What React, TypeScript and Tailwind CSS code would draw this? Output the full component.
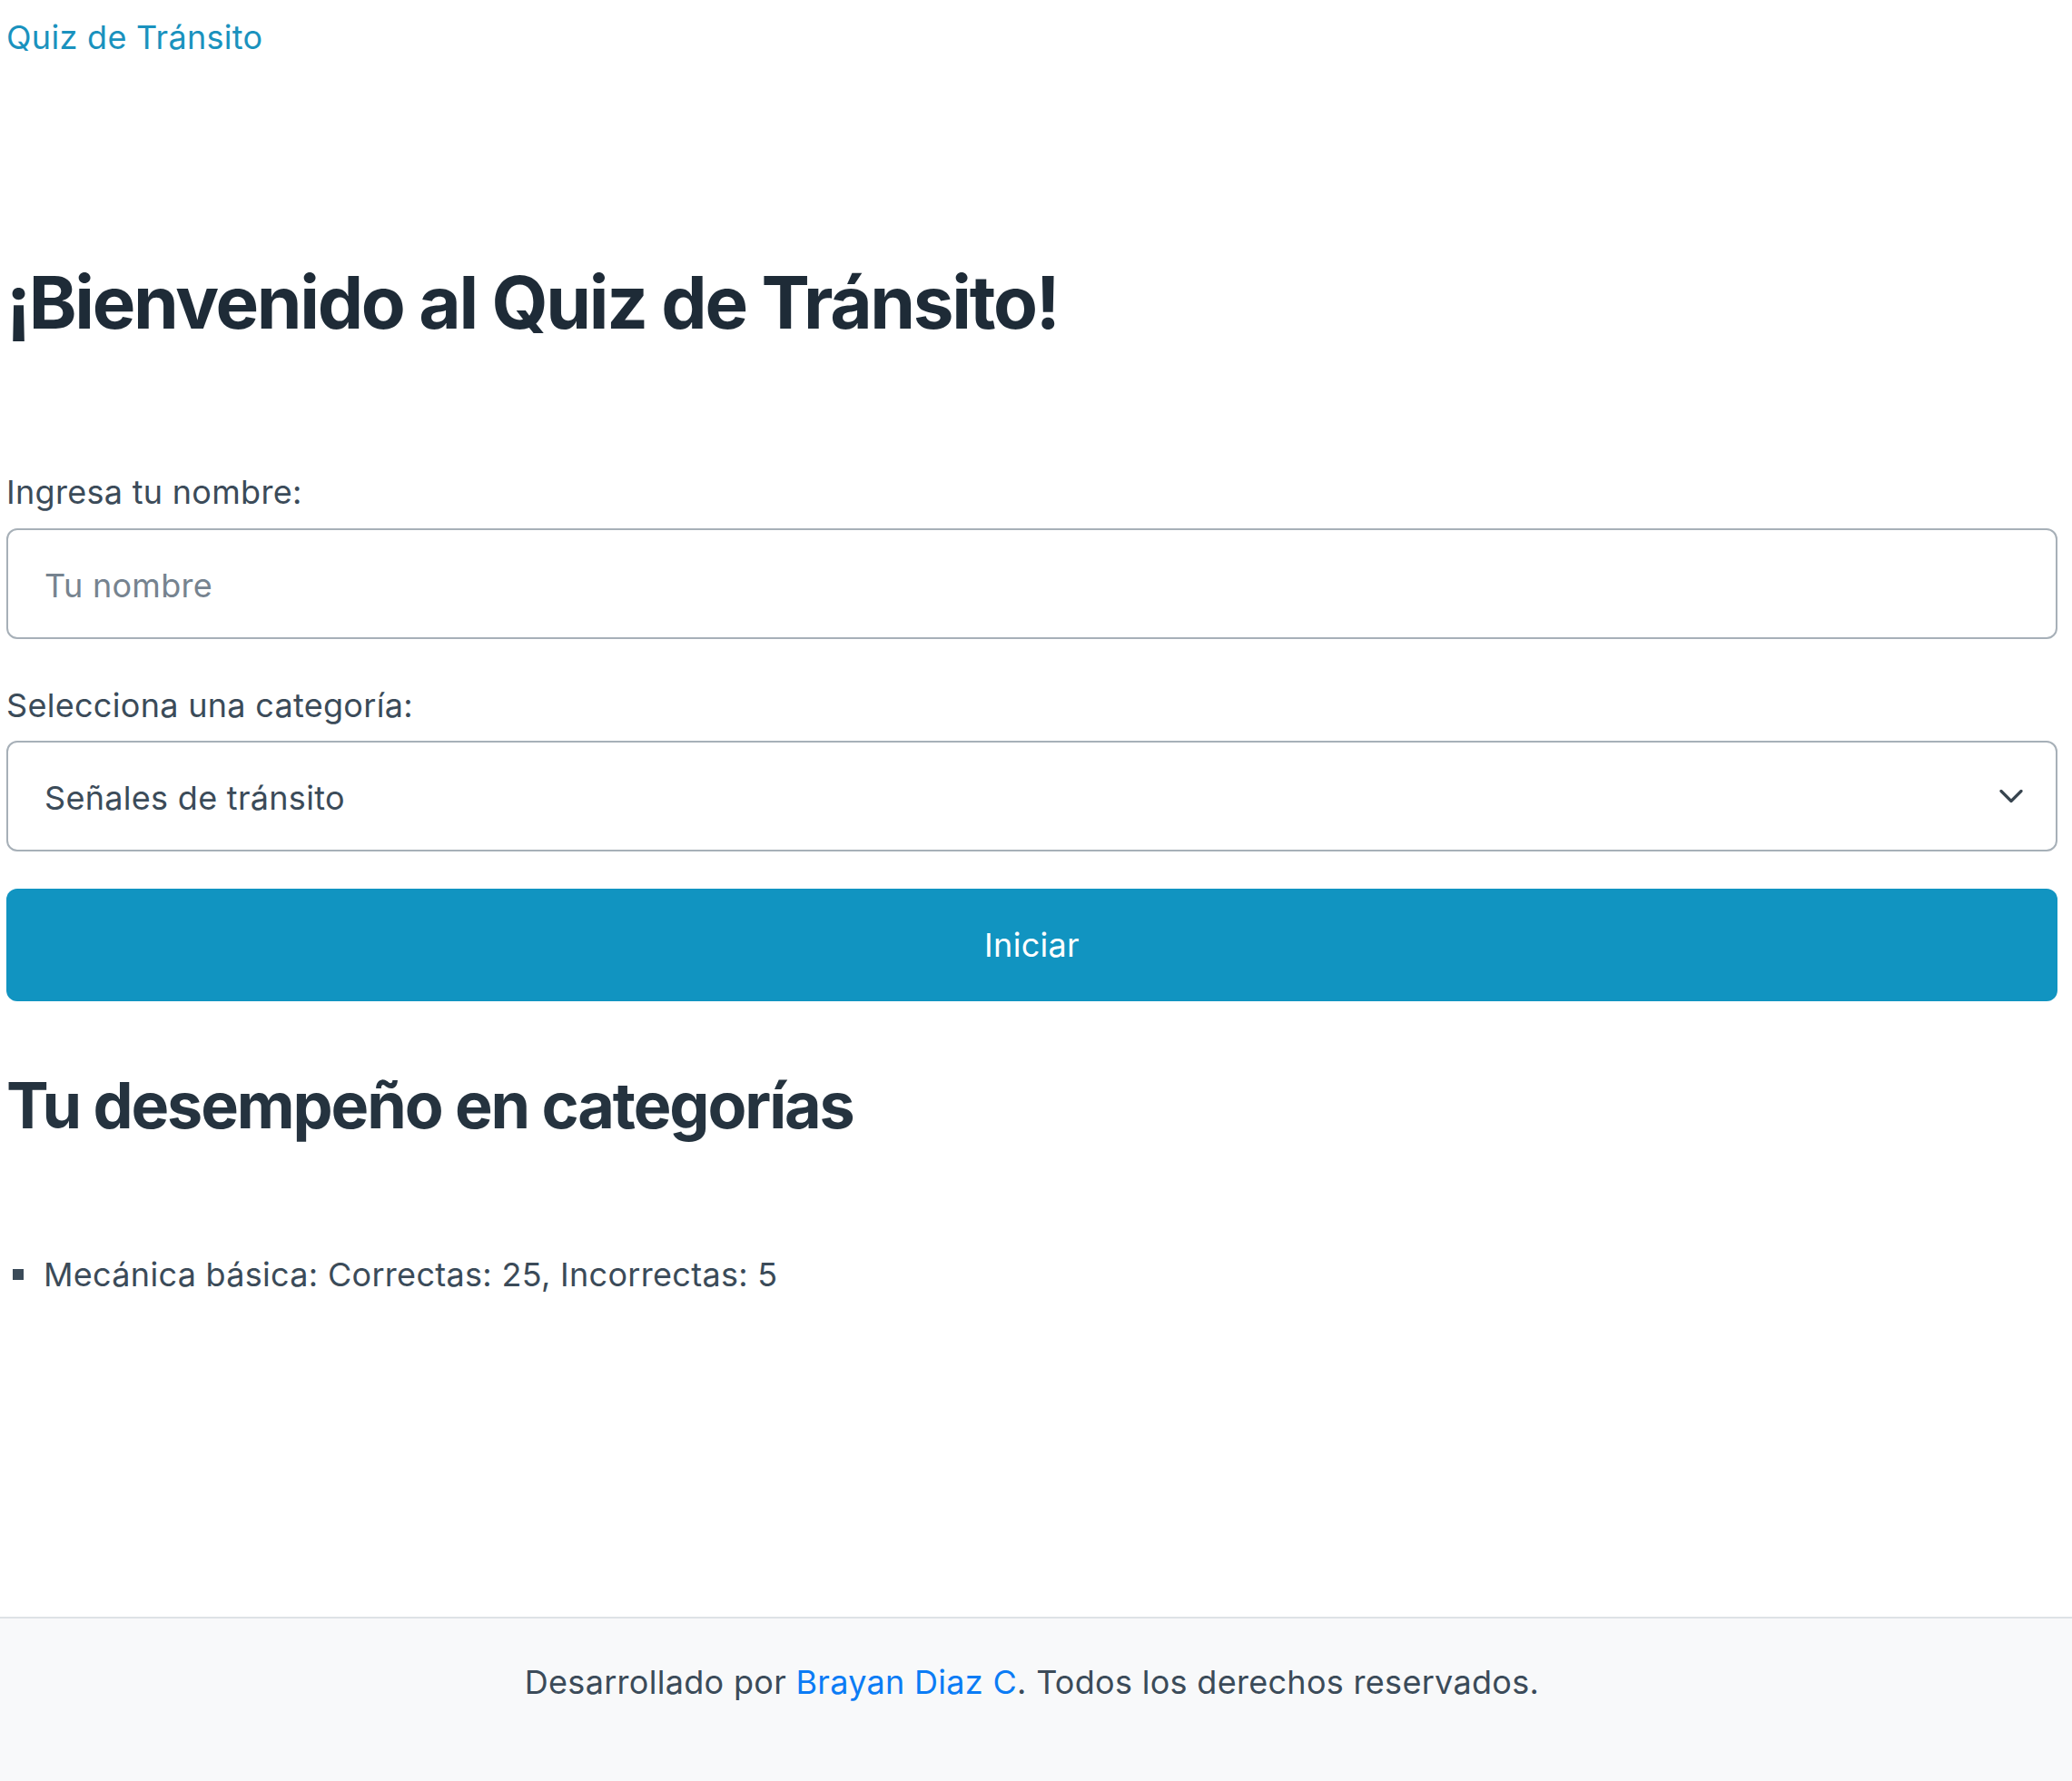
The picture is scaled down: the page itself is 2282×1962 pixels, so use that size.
import { useState } from "react";

const categorias = ["Señales de tránsito", "Mecánica básica", "Normas de circulación"];

const desempeno = [{ nombre: "Mecánica básica", correctas: 25, incorrectas: 5 }];

export default function App() {
  const [nombre, setNombre] = useState("");
  const [categoria, setCategoria] = useState(categorias[0]);

  return (
    <div className="flex min-h-screen flex-col bg-white font-['Inter',sans-serif] tracking-[0.3px] text-[#3b4b59]">
      <main className="flex-1 pl-[7px] pr-[16px]">
        <a href="#" className="block pt-[14px] text-[36px] leading-[54px] text-[#1a92be]">
          Quiz de Tránsito
        </a>

        <h1 className="mt-[217px] text-[80px] font-bold leading-[96px] tracking-[-2.3px] text-[#1e2b37]">
          ¡Bienvenido al Quiz de Tránsito!
        </h1>

        <label htmlFor="nombre" className="mt-[134px] block text-[36px] leading-[54px]">
          Ingresa tu nombre:
        </label>
        <input
          id="nombre"
          type="text"
          value={nombre}
          onChange={(e) => setNombre(e.target.value)}
          placeholder="Tu nombre"
          className="mt-[13px] block h-[122px] w-full rounded-[12px] border-2 border-[#a7b0b8] bg-white pl-[40px] pt-[4px] text-[36px] tracking-[0.3px] text-[#3b4b59] outline-none placeholder:text-[#76838f]"
        />

        <label htmlFor="categoria" className="mt-[46px] block text-[36px] leading-[54px]">
          Selecciona una categoría:
        </label>
        <div className="relative mt-[12px]">
          <select
            id="categoria"
            value={categoria}
            onChange={(e) => setCategoria(e.target.value)}
            className="block h-[122px] w-full appearance-none rounded-[12px] border-2 border-[#a7b0b8] bg-white pl-[40px] pt-[4px] text-[36px] tracking-[0.3px] text-[#3b4b59] outline-none"
          >
            {categorias.map((c) => (
              <option key={c}>{c}</option>
            ))}
          </select>
          <svg
            className="pointer-events-none absolute right-[38px] top-1/2 -translate-y-1/2"
            width="26"
            height="15"
            viewBox="0 0 26 15"
            fill="none"
          >
            <path d="M2 2l11 11 11-11" stroke="#38454f" strokeWidth="3.2" strokeLinecap="round" strokeLinejoin="round" />
          </svg>
        </div>

        <button className="mt-[41px] block h-[124px] w-full rounded-[12px] bg-[#1194c1] text-[36px] tracking-[0.3px] text-white">
          Iniciar
        </button>

        <h2 className="mt-[73px] text-[70px] font-bold leading-[84px] tracking-[-2.1px] text-[#25333f]">
          Tu desempeño en categorías
        </h2>

        <ul className="mt-[117px]">
          {desempeno.map((d) => (
            <li key={d.nombre} className="flex items-center text-[36px] leading-[54px]">
              <span className="ml-[7px] mr-[22px] h-[12px] w-[12px] bg-[#3b4b59]" />
              {d.nombre}: Correctas: {d.correctas}, Incorrectas: {d.incorrectas}
            </li>
          ))}
        </ul>
      </main>

      <footer className="h-[181px] border-t-2 border-[#dee2e6] bg-[#f8f9fa] pl-[7px] pr-[16px] pt-[43px] text-center text-[36px] leading-[54px]">
        Desarrollado por{" "}
        <a href="#" className="text-[#0b7cf5]">
          Brayan Diaz C
        </a>
        . Todos los derechos reservados.
      </footer>
    </div>
  );
}
